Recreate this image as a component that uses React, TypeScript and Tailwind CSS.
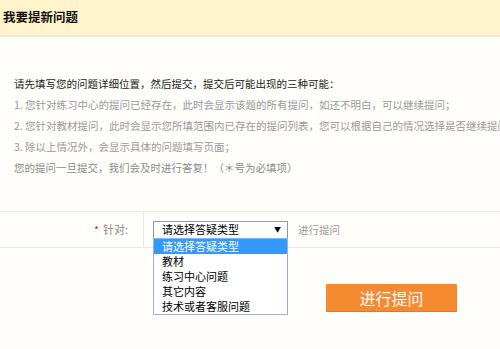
import { useState } from "react"

const options = ["请选择答疑类型", "教材", "练习中心问题", "其它内容", "技术或者客服问题"]

const notes = [
    "1. 您针对练习中心的提问已经存在，此时会显示该题的所有提问，如还不明白，可以继续提问；",
    "2. 您针对教材提问，此时会显示您所填范围内已存在的提问列表，您可以根据自己的情况选择是否继续提问；",
    "3. 除以上情况外，会显示具体的问题填写页面；",
]

export default function App() {
    const [selected, setSelected] = useState(0)

    return (
        <div className="w-[500px] h-[349px] overflow-hidden bg-[#fffefa] font-['Noto_Sans_CJK_SC',sans-serif]">
            {/* Header */}
            <div className="h-[37px] bg-[#fff4cb] border-b-2 border-[#f9e7d2] pl-[3px] flex items-center">
                <h2 className="text-[12.5px] font-bold text-[#111] leading-none">我要提新问题</h2>
            </div>

            {/* Intro */}
            <div className="pt-[36px] pl-[14px] text-[10.5px] leading-[21px] whitespace-nowrap overflow-hidden">
                <p className="text-[#222]">请先填写您的问题详细位置，然后提交，提交后可能出现的三种可能：</p>
                {notes.map((n) => (
                    <p key={n} className="text-[#9a9a9a]">{n}</p>
                ))}
                <p className="text-[#8a8a8a]">您的提问一旦提交，我们会及时进行答复！（＊号为必填项）</p>
            </div>

            {/* Form row */}
            <div className="mt-[33px] h-[37px] border-y border-[#ebe8e2] flex">
                <div className="w-[144px] border-r border-[#ebe8e2] flex items-center justify-end pr-[15px] gap-[4px]">
                    <span className="text-[#ff0000] text-[10px] leading-none">*</span>
                    <span className="text-[11px] text-[#888]">针对:</span>
                </div>
                <div className="flex items-center pl-[9px] gap-[10px]">
                    <div className="relative">
                        <div className="w-[135px] h-[18px] border border-[#8c9aab] bg-white flex items-center justify-between pl-[8px] pr-[6px]">
                            <span className="text-[11px] text-black leading-none">{options[selected]}</span>
                            <span className="text-[7px] text-black leading-none">▼</span>
                        </div>
                        <ul className="absolute left-0 top-[17px] w-[135px] bg-white border border-[#9cb2d2] z-10">
                            {options.map((o, i) => (
                                <li
                                    key={o}
                                    onClick={() => setSelected(i)}
                                    className={
                                        i === 0
                                            ? "h-[15px] pl-[8px] text-[11px] leading-[15px] bg-[#3399ff] text-white"
                                            : "h-[15px] pl-[8px] text-[11px] leading-[15px] text-black"
                                    }
                                >
                                    {o}
                                </li>
                            ))}
                        </ul>
                    </div>
                    <span className="text-[10.5px] text-[#999]">进行提问</span>
                </div>
            </div>

            {/* Submit */}
            <button className="mt-[36px] ml-[326px] w-[131px] h-[28px] bg-[#f58a30] border-b border-[#e07a22] rounded-[1px] text-white text-[16px] leading-none">
                进行提问
            </button>
        </div>
    )
}
